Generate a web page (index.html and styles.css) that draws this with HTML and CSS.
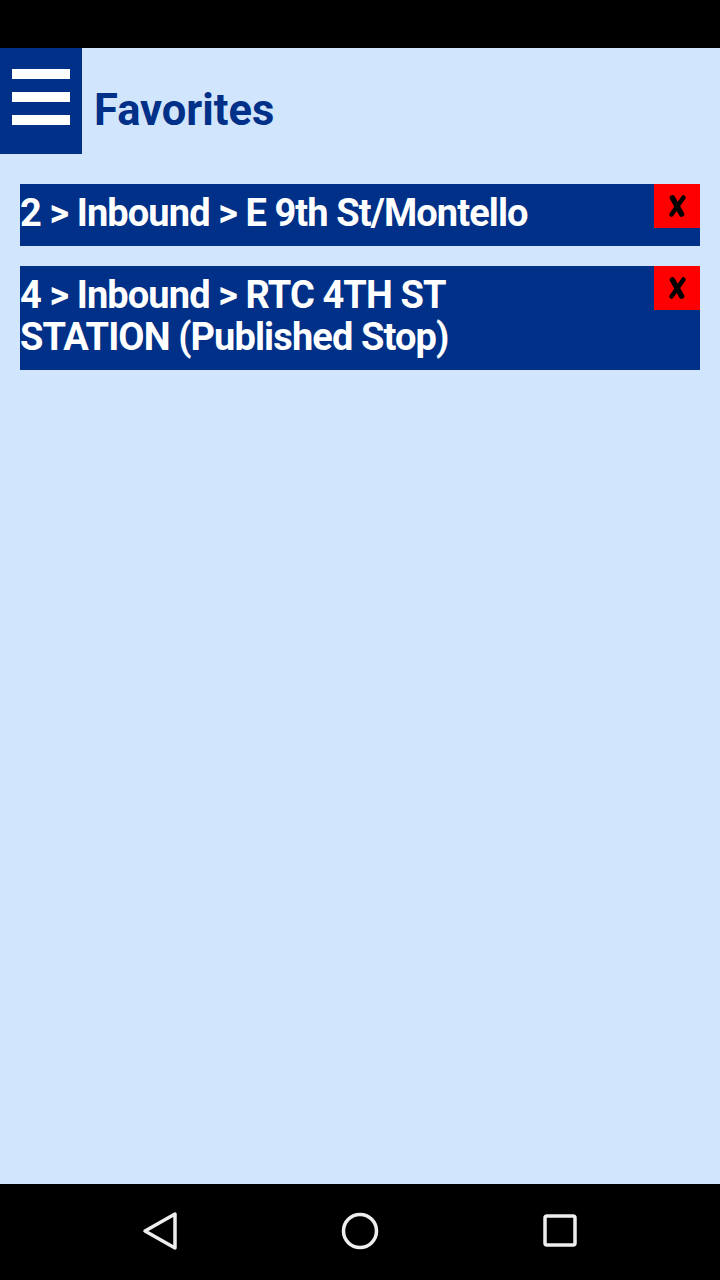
FILE: index.html
```html
<!DOCTYPE html>
<html>
<head>
<meta charset="utf-8">
<link rel="stylesheet" href="styles.css">
</head>
<body>
<div class="screen">
  <div class="statusbar"></div>
  <main class="content">
    <header class="header">
      <div class="menu-btn">
        <span class="bar"></span><span class="bar"></span><span class="bar"></span>
      </div>
      <h1 class="title">Favorites</h1>
    </header>
    <ul class="favs">
      <li class="fav">
        <span class="fav-text">2 &gt; Inbound &gt; E 9th St/Montello</span>
        <span class="del"><svg width="24" height="26" viewBox="0 0 24 26"><path d="M7.5 5 L16.5 21" stroke="#000" stroke-width="5.5" stroke-linecap="round" fill="none"/><path d="M18.5 4.5 L6.5 21.5" stroke="#000" stroke-width="4.5" stroke-linecap="round" fill="none"/></svg></span>
      </li>
      <li class="fav">
        <span class="fav-text">4 &gt; Inbound &gt; RTC 4TH ST STATION (Published Stop)</span>
        <span class="del"><svg width="24" height="26" viewBox="0 0 24 26"><path d="M7.5 5 L16.5 21" stroke="#000" stroke-width="5.5" stroke-linecap="round" fill="none"/><path d="M18.5 4.5 L6.5 21.5" stroke="#000" stroke-width="4.5" stroke-linecap="round" fill="none"/></svg></span>
      </li>
    </ul>
  </main>
  <nav class="navbar">
    <svg class="nav-icon" width="40" height="40" viewBox="0 0 40 40"><path d="M35 3 L35 37 L5 20 Z" stroke="#eee" stroke-width="3.5" stroke-linejoin="round" fill="none"/></svg>
    <svg class="nav-icon" width="40" height="40" viewBox="0 0 40 40"><circle cx="20" cy="20" r="16.5" stroke="#eee" stroke-width="3.5" fill="none"/></svg>
    <svg class="nav-icon" width="40" height="40" viewBox="0 0 40 40"><rect x="5" y="5" width="30" height="29" rx="2" stroke="#eee" stroke-width="3.5" fill="none"/></svg>
  </nav>
</div>
</body>
</html>
```

FILE: styles.css
```css
* { box-sizing: border-box; }
html, body { margin: 0; padding: 0; }
body { font-family: Roboto, "Liberation Sans", sans-serif; background: #000; }
.screen { width: 720px; height: 1280px; display: flex; flex-direction: column; }
.statusbar { height: 48px; background: #000; flex: none; }
.content { flex: 1; background: #d1e6fc; }
.header { display: flex; align-items: flex-start; height: 106px; }
.menu-btn {
  width: 82px; height: 106px; background: #003087; padding-bottom: 8px;
  display: flex; flex-direction: column; justify-content: center; align-items: center; gap: 13px;
}
.bar { display: block; width: 58px; height: 10px; background: #fff; }
.title {
  margin: 41px 0 0 12px; color: #003087; font-weight: 700; font-size: 43.5px;
  line-height: 1;
}
.favs { list-style: none; margin: 30px 20px 0; padding: 0; display: flex; flex-direction: column; gap: 20px; }
.fav {
  background: #003087; color: #fff; display: flex; justify-content: space-between; align-items: flex-start;
}
.fav-text {
  font-weight: 700; font-size: 38px; line-height: 41.5px; padding: 9px 0 11.5px;
  width: 560px; letter-spacing: -0.9px;
}
.del {
  width: 46px; height: 44px; background: #ff0000; flex: none;
  display: flex; align-items: center; justify-content: center;
}
.navbar {
  height: 96px; background: #000; flex: none;
  display: flex; align-items: center; justify-content: center; gap: 160px; padding-bottom: 2px;
}
```
